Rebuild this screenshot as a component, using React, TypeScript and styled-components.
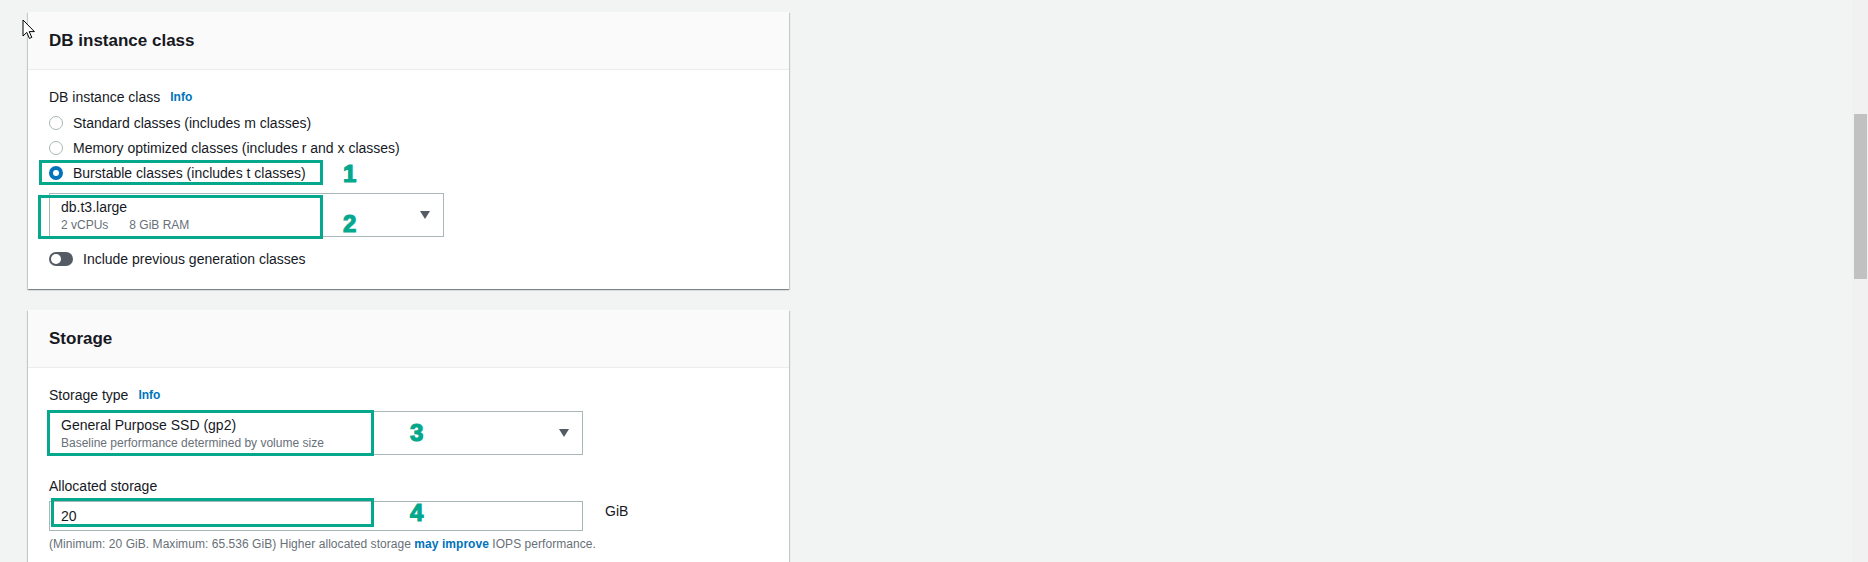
import React from "react";
import styled, {createGlobalStyle} from "styled-components";

const GlobalStyle = createGlobalStyle`
  html, body {
    margin: 0;
    height: 100%;
    overflow: hidden;
    background: #f2f3f3;
    font-family: "Liberation Sans", Arial, sans-serif;
    color: #16191f;
  }
`

const Page = styled.div`
  position: relative;
  display: flex;
  height: 100vh;
`

const Main = styled.div`
  flex: 1;
  display: flex;
  flex-direction: column;
  gap: 21px;
  padding: 12px 0 0 28px;
`

const Card = styled.section`
  position: relative;
  width: 761px;
  flex-shrink: 0;
  background: #fff;
  border-top: 1px solid #eaeded;
  box-shadow: 0 1px 1px 0 rgba(0, 28, 36, .3), 1px 1px 1px 0 rgba(0, 28, 36, .15), -1px 1px 1px 0 rgba(0, 28, 36, .15);
`

const CardHeader = styled.div`
  height: 57px;
  display: flex;
  align-items: center;
  padding: 0 21px;
  background: #fafafa;
  border-bottom: 1px solid #eaeded;
  margin-top: -1px;

  > h2 {
    margin: 0;
    font-size: 17px;
    font-weight: bold;
  }
`

const CardBody = styled.div`
  padding: 17px 21px 20px;
`

const Label = styled.div`
  display: flex;
  align-items: center;
  gap: 10px;
  font-size: 14px;
  line-height: 20px;
`

const InfoLink = styled.span`
  font-size: 12px;
  font-weight: bold;
  color: #0073bb;
`

const RadioGroup = styled.div`
  margin-top: 3px;
`

const RadioRow = styled.label`
  display: flex;
  align-items: center;
  gap: 10px;
  height: 25px;
  font-size: 14px;
`

const RadioDot = styled.span<{ $checked?: boolean }>`
  box-sizing: border-box;
  width: 14px;
  height: 14px;
  border-radius: 50%;
  background: #fff;
  border: ${p => p.$checked ? "4px solid #0073bb" : "1px solid #aab7b8"};
`

const Select = styled.div<{ $width: number; $gap: number }>`
  box-sizing: border-box;
  width: ${p => p.$width}px;
  margin-top: ${p => p.$gap}px;
  display: flex;
  align-items: center;
  padding: 3px 13px 3px 11px;
  border: 1px solid #aab7b8;
  background: #fff;
`

const SelectText = styled.div`
  flex: 1;

  > .main {
    font-size: 14px;
    line-height: 20px;
  }

  > .sub {
    display: flex;
    gap: 21px;
    font-size: 12px;
    line-height: 16px;
    color: #687078;
  }
`

const Caret = styled.span`
  width: 0;
  height: 0;
  border-left: 5px solid transparent;
  border-right: 5px solid transparent;
  border-top: 8px solid #545b64;
`

const ToggleRow = styled.div`
  display: flex;
  align-items: center;
  gap: 10px;
  margin-top: 12px;
  font-size: 14px;
  line-height: 20px;
`

const Toggle = styled.span`
  position: relative;
  width: 24px;
  height: 14px;
  border-radius: 7px;
  background: #545b64;

  &::after {
    content: "";
    position: absolute;
    left: 2px;
    top: 2px;
    width: 10px;
    height: 10px;
    border-radius: 50%;
    background: #fff;
  }
`

const FieldGap = styled.div`
  height: 21px;
`

const InputRow = styled.div`
  display: flex;
  align-items: flex-start;
  gap: 22px;
  margin-top: 5px;
`

const Input = styled.div`
  box-sizing: border-box;
  width: 534px;
  height: 30px;
  padding: 0 11px;
  display: flex;
  align-items: center;
  border: 1px solid #aab7b8;
  font-size: 14px;
`

const Unit = styled.span`
  font-size: 14px;
  line-height: 20px;
`

const Help = styled.div`
  margin-top: 5px;
  font-size: 12px;
  line-height: 16px;
  letter-spacing: 0.05px;
  color: #687078;

  > b {
    color: #0073bb;
  }
`

// green annotation marks drawn over the form
const Mark = styled.div<{ $left: number; $top: number; $w: number; $h: number }>`
  position: absolute;
  box-sizing: border-box;
  left: ${p => p.$left}px;
  top: ${p => p.$top}px;
  width: ${p => p.$w}px;
  height: ${p => p.$h}px;
  border: 3px solid #05a88c;
  pointer-events: none;
`

const Step = styled.div<{ $left: number; $top: number }>`
  position: absolute;
  left: ${p => p.$left}px;
  top: ${p => p.$top}px;
  font-size: 24px;
  line-height: 24px;
  font-weight: bold;
  color: #05a88c;
  -webkit-text-stroke: 1.2px #05a88c;
`

const Cursor = styled.svg`
  position: absolute;
  left: 22px;
  top: 19px;
`

const ScrollTrack = styled.div`
  width: 16px;
  height: 100vh;
  background: #f1f1f1;
`

const ScrollThumb = styled.div`
  width: 13px;
  height: 165px;
  margin: 114px 0 0 2px;
  background: #c1c1c1;
`

function App() {
    return (
        <Page>
            <GlobalStyle/>
            <Main>
                <Card>
                    <CardHeader><h2>DB instance class</h2></CardHeader>
                    <CardBody>
                        <Label>DB instance class <InfoLink>Info</InfoLink></Label>
                        <RadioGroup>
                            <RadioRow><RadioDot/>Standard classes (includes m classes)</RadioRow>
                            <RadioRow><RadioDot/>Memory optimized classes (includes r and x classes)</RadioRow>
                            <RadioRow><RadioDot $checked/>Burstable classes (includes t classes)</RadioRow>
                        </RadioGroup>
                        <Select $width={395} $gap={8}>
                            <SelectText>
                                <div className="main">db.t3.large</div>
                                <div className="sub"><span>2 vCPUs</span><span>8 GiB RAM</span></div>
                            </SelectText>
                            <Caret/>
                        </Select>
                        <ToggleRow><Toggle/>Include previous generation classes</ToggleRow>
                    </CardBody>
                    <Mark $left={11} $top={147} $w={284} $h={25}/>
                    <Step $left={315} $top={149}>1</Step>
                    <Mark $left={10} $top={182} $w={285} $h={44}/>
                    <Step $left={315} $top={199}>2</Step>
                </Card>

                <Card>
                    <CardHeader><h2>Storage</h2></CardHeader>
                    <CardBody>
                        <Label>Storage type <InfoLink>Info</InfoLink></Label>
                        <Select $width={534} $gap={6}>
                            <SelectText>
                                <div className="main">General Purpose SSD (gp2)</div>
                                <div className="sub">Baseline performance determined by volume size</div>
                            </SelectText>
                            <Caret/>
                        </Select>
                        <FieldGap/>
                        <Label>Allocated storage</Label>
                        <InputRow>
                            <Input>20</Input>
                            <Unit>GiB</Unit>
                        </InputRow>
                        <Help>
                            (Minimum: 20 GiB. Maximum: 65.536 GiB) Higher allocated storage <b>may improve</b> IOPS performance.
                        </Help>
                    </CardBody>
                    <Mark $left={19} $top={99} $w={327} $h={46}/>
                    <Step $left={382} $top={110}>3</Step>
                    <Mark $left={23} $top={187} $w={323} $h={29}/>
                    <Step $left={382} $top={190}>4</Step>
                </Card>
            </Main>
            <ScrollTrack><ScrollThumb/></ScrollTrack>
            <Cursor width="14" height="21" viewBox="0 0 14 21">
                <path d="M1 1 L1 17 L4.8 13.4 L7.4 19.4 L9.8 18.4 L7.2 12.6 L12.4 12.6 Z" fill="#fff" stroke="#000"
                      strokeWidth="1" strokeLinejoin="round"/>
            </Cursor>
        </Page>
    );
}

export default App;
